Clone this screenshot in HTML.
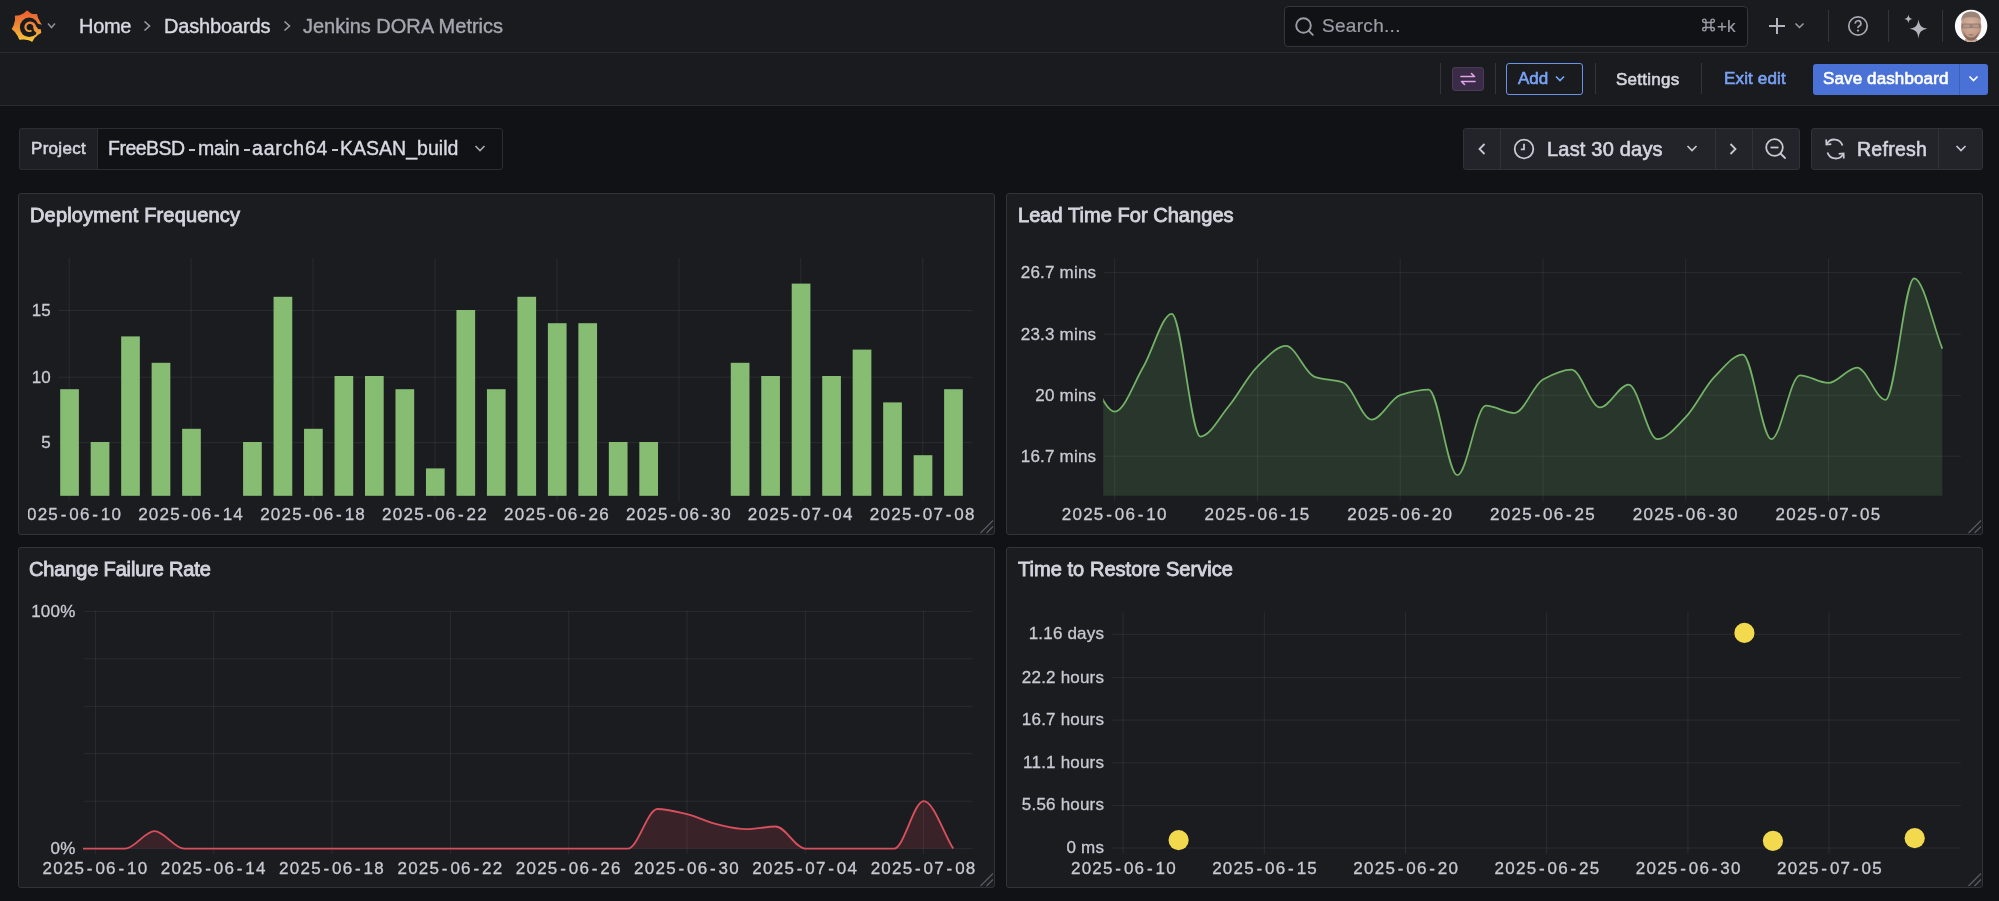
<!DOCTYPE html>
<html><head><meta charset="utf-8">
<style>
*{box-sizing:border-box;margin:0;padding:0}
html,body{width:1999px;height:901px;overflow:hidden;background:#111216;font-family:"Liberation Sans",sans-serif;color:#d0d0dc}
.abs{position:absolute}
.t{position:absolute;white-space:nowrap;line-height:1}
.bar1{position:absolute;left:0;top:0;width:1999px;height:53px;background:#1a1b1f;border-bottom:1px solid #2a2b31}
.bar2{position:absolute;left:0;top:53px;width:1999px;height:53px;background:#1a1b1f;border-bottom:1px solid #2a2b31}
.panel{position:absolute;background:#1b1c20;border:1px solid #323339;border-radius:3px}
.charts{position:absolute;left:0;top:0}
.g{stroke:rgba(204,204,220,0.085);stroke-width:1}
.bar{fill:#86bd73}
.al{font-family:"Liberation Sans",sans-serif;font-size:17px;fill:#c9c9d3;stroke:#c9c9d3;stroke-width:0.3px;letter-spacing:0.2px}
.dl{font-family:"Liberation Sans",sans-serif;font-size:17px;fill:#c9c9d3;stroke:#c9c9d3;stroke-width:0.3px;letter-spacing:1.25px}
.hd{stroke:rgba(204,204,220,0.35);stroke-width:1.3}
.div{position:absolute;width:1px;background:#34353b}
.btn{position:absolute;background:#22242a;border:1px solid #30323a;border-radius:3px}
.t,.charts{will-change:transform}
.t{-webkit-text-stroke:0.2px currentColor}
.t[style*="bold"]{-webkit-text-stroke:0}
</style></head><body>
<div class="bar1"></div>
<div class="bar2"></div>

<!-- logo -->
<svg class="abs" style="left:0;top:0" width="60" height="52" viewBox="0 0 60 52">
 <defs><linearGradient id="lg" x1="0" y1="10" x2="0" y2="42" gradientUnits="userSpaceOnUse"><stop offset="0" stop-color="#e95b30"/><stop offset="0.55" stop-color="#ef8f35"/><stop offset="1" stop-color="#f6cf3c"/></linearGradient></defs>
 <path fill="url(#lg)" d="M13.1,26.4L13.4,25.8L13.7,25.2L13.9,24.6L14.0,24.1L14.1,23.5L14.3,22.9L14.4,22.3L14.6,21.8L14.8,21.2L15.0,20.7L15.1,20.0L15.0,19.3L15.0,18.6L15.0,17.8L14.9,16.9L14.9,16.0L15.5,15.6L16.4,15.5L17.3,15.5L18.1,15.4L18.8,15.3L19.5,15.2L20.0,15.0L20.6,14.7L21.1,14.4L21.6,14.2L22.1,13.9L22.7,13.7L23.2,13.5L23.8,13.2L24.3,12.8L24.8,12.3L25.4,11.8L26.0,11.3L26.6,10.8L27.3,10.6L28.0,11.1L28.6,11.6L29.2,12.1L29.7,12.6L30.3,13.0L30.8,13.3L31.4,13.5L31.9,13.7L32.5,13.9L33.1,13.9L33.8,13.9L34.5,13.9L35.2,13.9L36.0,13.9L36.9,13.9L37.2,14.6L37.4,15.4L37.6,16.1L37.8,16.8L37.9,17.5L38.1,18.1L38.4,18.7L38.7,19.1L39.0,19.6L39.3,20.2L39.5,20.7L39.8,21.2L40.0,21.8L40.2,22.3L40.6,22.8L41.1,23.4L41.5,23.9L41.9,24.5L41.6,25.2L41.2,25.8L41.0,26.4L40.8,27.0L40.7,27.6L40.7,28.2L40.7,28.8L40.8,29.4L40.9,30.0L41.0,30.7L41.1,31.4L41.2,32.2L41.2,32.9L40.6,33.3L39.9,33.7L39.3,34.1L38.7,34.4L38.2,34.8L37.7,35.1L37.3,35.5L36.8,35.9L36.4,36.4L36.0,36.7L35.5,37.1L35.0,37.5L34.6,37.9L34.2,38.4L33.9,39.0L33.5,39.7L33.1,40.4L32.6,41.1L32.2,41.9L31.3,41.5L30.6,41.1L29.8,40.8L29.2,40.5L28.5,40.2L27.9,40.0L27.3,39.9L26.7,39.9L26.1,39.8L25.5,39.8L25.0,39.7L24.4,39.6L23.8,39.5L23.2,39.5L22.5,39.5L21.8,39.6L21.1,39.7L20.4,39.7L19.6,39.8L19.1,39.3L18.8,38.6L18.5,37.9L18.2,37.2L17.9,36.6L17.7,36.0L17.3,35.5L17.0,35.1L16.6,34.6L16.2,34.1L15.9,33.7L15.6,33.1L15.3,32.6L15.0,32.1L14.6,31.7L14.1,31.2L13.5,30.7L13.0,30.2L12.4,29.7L11.7,29.1L12.0,28.4L12.4,27.7L12.7,27.0Z"/>
 <ellipse cx="29.2" cy="27.3" rx="9.3" ry="9.7" fill="#1a1b1f"/>
 <path fill="#1a1b1f" d="M36.5,23.5 L42,24.8 L41.5,29.3 L37.5,29 Z"/>
 <path fill="url(#lg)" d="M36.12,29.12L36.24,28.22L36.24,27.31L36.11,26.43L35.87,25.57L35.51,24.77L35.04,24.03L34.49,23.36L33.86,22.79L33.15,22.30L32.40,21.93L31.61,21.66L30.79,21.51L29.97,21.47L29.16,21.54L28.38,21.73L27.63,22.01L26.94,22.40L26.31,22.86L25.76,23.41L25.30,24.02L24.92,24.68L24.65,25.38L24.47,26.11L24.40,26.84L24.43,27.57L24.56,28.28L24.78,28.96L25.09,29.60L25.48,30.18L25.94,30.70L26.46,31.14L27.04,31.50L27.65,31.78L28.28,31.96L28.93,32.06L29.58,32.07L30.21,31.99L30.82,31.82L31.40,31.57L31.93,31.25L31.07,29.78L30.75,29.97L30.39,30.11L30.01,30.21L29.63,30.25L29.23,30.24L28.84,30.17L28.46,30.05L28.09,29.87L27.75,29.65L27.44,29.38L27.17,29.06L26.95,28.71L26.77,28.33L26.64,27.92L26.58,27.50L26.57,27.07L26.62,26.64L26.73,26.21L26.90,25.81L27.12,25.42L27.40,25.07L27.73,24.76L28.09,24.49L28.50,24.27L28.93,24.11L29.39,24.01L29.86,23.98L30.33,24.01L30.80,24.10L31.25,24.26L31.68,24.48L32.08,24.76L32.43,25.10L32.74,25.48L33.00,25.90L33.20,26.36L33.33,26.85L33.40,27.35L33.40,27.86L33.32,28.37Z"/>
 <path fill="url(#lg)" d="M33.2,27.2 L36.4,26.6 L39.2,30.4 L37.2,33.6 L34,30.5 Z"/>
 <polyline points="48,23.5 51.5,27.5 55,23.5" fill="none" stroke="#8d8e96" stroke-width="1.5"/>
</svg>

<div class="t" style="left:79px;top:15.7px;font-size:20px;color:#d8d8e2;letter-spacing:-0.3px;-webkit-text-stroke:0.4px #d8d8e2">Home</div>
<svg class="abs" style="left:140px;top:18px" width="14" height="16"><polyline points="4.5,3.5 9.5,8 4.5,12.5" fill="none" stroke="#9a9ba4" stroke-width="1.6"/></svg>
<div class="t" style="left:164px;top:15.7px;font-size:20px;color:#d8d8e2;letter-spacing:-0.15px;-webkit-text-stroke:0.4px #d8d8e2">Dashboards</div>
<svg class="abs" style="left:280px;top:18px" width="14" height="16"><polyline points="4.5,3.5 9.5,8 4.5,12.5" fill="none" stroke="#9a9ba4" stroke-width="1.6"/></svg>
<div class="t" style="left:303px;top:15.7px;font-size:20px;color:#a6a6b0;-webkit-text-stroke:0.4px #a6a6b0">Jenkins DORA Metrics</div>

<!-- search -->
<div class="abs" style="left:1284px;top:6px;width:464px;height:41px;background:#111216;border:1px solid #35363c;border-radius:4px"></div>
<svg class="abs" style="left:1290px;top:12px" width="28" height="28" viewBox="0 0 28 28"><circle cx="13.5" cy="13.5" r="7.3" fill="none" stroke="#9c9ca6" stroke-width="1.9"/><line x1="18.8" y1="18.8" x2="22.8" y2="22.8" stroke="#9c9ca6" stroke-width="1.9" stroke-linecap="round"/></svg>
<div class="t" style="left:1322px;top:16.2px;font-size:19px;color:#9c9ca6;letter-spacing:0.3px">Search...</div>
<svg class="abs" style="left:1700px;top:17px" width="20" height="18" viewBox="0 0 20 18">
 <path d="M6,5.5 H11 V10.5 H6 Z M6,5.5 V3.8 A1.7,1.7 0 1 0 4.3,5.5 H6 M11,5.5 V3.8 A1.7,1.7 0 1 1 12.7,5.5 H11 M6,10.5 V12.2 A1.7,1.7 0 1 1 4.3,10.5 H6 M11,10.5 V12.2 A1.7,1.7 0 1 0 12.7,10.5 H11" fill="none" stroke="#9c9ca6" stroke-width="1.4"/>
</svg>
<div class="t" style="left:1717px;top:17.7px;font-size:17px;color:#9c9ca6">+k</div>

<!-- right icons -->
<svg class="abs" style="left:1765px;top:14px" width="45" height="24" viewBox="0 0 45 24">
 <line x1="12" y1="4" x2="12" y2="20" stroke="#b4b4be" stroke-width="2"/><line x1="4" y1="12" x2="20" y2="12" stroke="#b4b4be" stroke-width="2"/>
 <polyline points="30.5,9.5 34.5,13.5 38.5,9.5" fill="none" stroke="#9c9ca6" stroke-width="1.5"/>
</svg>
<div class="div" style="left:1828px;top:10px;height:32px"></div>
<svg class="abs" style="left:1846px;top:14px" width="24" height="24" viewBox="0 0 24 24">
 <circle cx="12" cy="12" r="9.2" fill="none" stroke="#a8a8b2" stroke-width="1.7"/>
 <path d="M9.3,9.6 A2.8,2.8 0 1 1 12.9,12.2 C12.2,12.5 12,13 12,13.9" fill="none" stroke="#a8a8b2" stroke-width="1.7"/>
 <circle cx="12" cy="16.6" r="1.1" fill="#a8a8b2"/>
</svg>
<div class="div" style="left:1888px;top:10px;height:32px"></div>
<svg class="abs" style="left:1902px;top:13px" width="28" height="28" viewBox="0 0 28 28">
 <path d="M16.5,6.2 C17.4,12.6 19.2,14.6 25.4,15.8 C19.2,17 17.4,19 16.5,25.4 C15.6,19 13.8,17 7.6,15.8 C13.8,14.6 15.6,12.6 16.5,6.2 Z" fill="#b4b4be"/>
 <path d="M6.4,1.6 C6.9,4.6 7.6,5.4 10.7,6 C7.6,6.6 6.9,7.4 6.4,10.4 C5.9,7.4 5.2,6.6 2.1,6 C5.2,5.4 5.9,4.6 6.4,1.6 Z" fill="#b4b4be"/>
</svg>
<div class="div" style="left:1942px;top:10px;height:32px"></div>
<svg class="abs" style="left:1954px;top:9px" width="34" height="34" viewBox="0 0 34 34">
 <defs><clipPath id="av"><circle cx="17.1" cy="16.9" r="16.2"/></clipPath>
 <radialGradient id="fg" cx="0.5" cy="0.42" r="0.6"><stop offset="0" stop-color="#d8b4a0"/><stop offset="0.7" stop-color="#c39c88"/><stop offset="1" stop-color="#a88474"/></radialGradient></defs>
 <circle cx="17.1" cy="16.9" r="16.2" fill="#fbfbfb"/>
 <g clip-path="url(#av)">
  <path d="M11,30 L23,30 L24,36 L10,36 Z" fill="#c9a592"/>
  <ellipse cx="17.1" cy="17.6" rx="10.2" ry="13.6" fill="url(#fg)"/>
  <path d="M7.2,13 C7,6 11,2.6 17.1,2.6 C23.2,2.6 27.2,6 27,13 C25.8,9.5 24,8.2 17.1,8.2 C10.2,8.2 8.4,9.5 7.2,13 Z" fill="#9c8478"/>
  <rect x="8" y="14.6" width="18.4" height="4.6" rx="1.5" fill="#6b5a55" opacity="0.55"/>
  <rect x="9.2" y="15.5" width="6.6" height="3" rx="1" fill="#c8a898" opacity="0.6"/>
  <rect x="18.4" y="15.5" width="6.6" height="3" rx="1" fill="#c8a898" opacity="0.6"/>
  <path d="M9.5,22 C10.5,30 13.5,31.5 17.1,31.5 C20.7,31.5 23.7,30 24.7,22 C23,27 20,28.5 17.1,28.5 C14.2,28.5 11.2,27 9.5,22 Z" fill="#7e6356" opacity="0.8"/>
  <rect x="14.6" y="25" width="5" height="1.5" rx="0.7" fill="#9a7466" opacity="0.8"/>
 </g>
</svg>

<!-- toolbar row -->
<div class="div" style="left:1440px;top:63px;height:31px"></div>
<div class="abs" style="left:1452px;top:67px;width:32px;height:24px;background:#3a2c46;border:1px solid #4a3a58;border-radius:3px"></div>
<svg class="abs" style="left:1452px;top:67px" width="32" height="24" viewBox="0 0 32 24">
 <path d="M9,9.5 H22.5 M19.5,6.5 L22.5,9.5 M23,14.5 H9.5 M12.5,17.5 L9.5,14.5" fill="none" stroke="#e0a4e8" stroke-width="1.6" stroke-linecap="round"/>
</svg>
<div class="div" style="left:1494.5px;top:63px;height:31px"></div>
<div class="abs" style="left:1506px;top:63px;width:77px;height:32px;border:1.5px solid #6a93e8;border-radius:3px"></div>
<div class="t" style="left:1517.5px;top:70.3px;font-size:17px;-webkit-text-stroke:0.6px #79a2f5;color:#79a2f5;letter-spacing:0.0px">Add</div>
<svg class="abs" style="left:1552px;top:72px" width="16" height="14"><polyline points="4,4.5 8,8.5 12,4.5" fill="none" stroke="#79a2f5" stroke-width="1.7"/></svg>
<div class="div" style="left:1594.5px;top:63px;height:31px"></div>
<div class="t" style="left:1616px;top:70.6px;font-size:17px;-webkit-text-stroke:0.6px #d4d4de;color:#d4d4de;letter-spacing:0.25px">Settings</div>
<div class="div" style="left:1701px;top:63px;height:31px"></div>
<div class="t" style="left:1723.5px;top:70.3px;font-size:17px;-webkit-text-stroke:0.6px #79a2f5;color:#79a2f5;letter-spacing:0.15px">Exit edit</div>
<div class="abs" style="left:1813px;top:63.5px;width:175px;height:31px;background:#4a72d6;border-radius:3px"></div>
<div class="abs" style="left:1958.5px;top:63.5px;width:1px;height:31px;background:#3d5fb8"></div>
<div class="t" style="left:1823px;top:70.3px;font-size:17px;-webkit-text-stroke:0.6px #ffffff;color:#ffffff;letter-spacing:0.12px">Save dashboard</div>
<svg class="abs" style="left:1966px;top:72px" width="16" height="14"><polyline points="3.5,4.5 7.5,8.5 11.5,4.5" fill="none" stroke="#ffffff" stroke-width="1.7"/></svg>

<!-- variable -->
<div class="abs" style="left:19px;top:128px;width:484px;height:42px;background:#111216;border:1px solid #2c2d33;border-radius:3px"></div>
<div class="abs" style="left:19px;top:128px;width:79px;height:42px;background:#1e1f24;border:1px solid #2c2d33;border-radius:3px 0 0 3px"></div>
<div class="t" style="left:30.5px;top:140.4px;font-size:17px;-webkit-text-stroke:0.6px #d4d4de;color:#d4d4de;letter-spacing:0.3px">Project</div>
<div class="t" style="left:107.5px;top:138.6px;font-size:19.5px;color:#d8d8e2;letter-spacing:-0.5px;-webkit-text-stroke:0.4px #d8d8e2">FreeBSD</div><div class="abs" style="left:189px;top:149px;width:6px;height:2px;background:#c4c4ce"></div><div class="t" style="left:197.5px;top:138.6px;font-size:19.5px;color:#d8d8e2;letter-spacing:-0.2px;-webkit-text-stroke:0.4px #d8d8e2">main</div><div class="abs" style="left:244px;top:149px;width:6px;height:2px;background:#c4c4ce"></div><div class="t" style="left:252px;top:138.6px;font-size:19.5px;color:#d8d8e2;letter-spacing:0.83px;-webkit-text-stroke:0.4px #d8d8e2">aarch64</div><div class="abs" style="left:331.8px;top:149px;width:6px;height:2px;background:#c4c4ce"></div><div class="t" style="left:339.5px;top:138.6px;font-size:19.5px;color:#d8d8e2;letter-spacing:0.02px;-webkit-text-stroke:0.4px #d8d8e2">KASAN_build</div>
<svg class="abs" style="left:472px;top:141px" width="16" height="14"><polyline points="3.5,5 8,9.5 12.5,5" fill="none" stroke="#a8a8b2" stroke-width="1.6"/></svg>

<!-- time picker -->
<div class="btn" style="left:1463px;top:128px;width:337px;height:42px"></div>
<div class="div" style="left:1500px;top:128px;height:42px;background:#30323a"></div>
<div class="div" style="left:1714.5px;top:128px;height:42px;background:#30323a"></div>
<div class="div" style="left:1752px;top:128px;height:42px;background:#30323a"></div>
<svg class="abs" style="left:1474px;top:140px" width="16" height="18"><polyline points="10.5,4 5.5,9 10.5,14" fill="none" stroke="#c8c8d2" stroke-width="1.8"/></svg>
<svg class="abs" style="left:1512px;top:137px" width="24" height="24" viewBox="0 0 24 24"><circle cx="12" cy="12" r="9.3" fill="none" stroke="#c8c8d2" stroke-width="1.8"/><polyline points="12,6.8 12,12.3 8.8,12.3" fill="none" stroke="#c8c8d2" stroke-width="1.8"/></svg>
<div class="t" style="left:1547px;top:138.7px;font-size:20px;-webkit-text-stroke:0.6px #d4d4de;color:#d4d4de;letter-spacing:0.2px">Last 30 days</div>
<svg class="abs" style="left:1684px;top:141px" width="16" height="14"><polyline points="3.5,5 8,9.5 12.5,5" fill="none" stroke="#c8c8d2" stroke-width="1.7"/></svg>
<svg class="abs" style="left:1725px;top:140px" width="16" height="18"><polyline points="5.5,4 10.5,9 5.5,14" fill="none" stroke="#c8c8d2" stroke-width="1.8"/></svg>
<svg class="abs" style="left:1763px;top:136px" width="26" height="26" viewBox="0 0 26 26"><circle cx="11.5" cy="11.5" r="8.3" fill="none" stroke="#c8c8d2" stroke-width="1.8"/><line x1="7.5" y1="11.5" x2="15.5" y2="11.5" stroke="#c8c8d2" stroke-width="1.8"/><line x1="17.5" y1="17.5" x2="22" y2="22" stroke="#c8c8d2" stroke-width="1.8" stroke-linecap="round"/></svg>
<div class="btn" style="left:1811px;top:128px;width:172px;height:42px"></div>
<div class="div" style="left:1938px;top:128px;height:42px;background:#30323a"></div>
<svg class="abs" style="left:1822px;top:136px" width="26" height="26" viewBox="0 0 26 26">
 <path d="M20.5,9.5 A8.5,8.5 0 0 0 4.8,8.2" fill="none" stroke="#c8c8d2" stroke-width="1.8"/>
 <path d="M5.5,16.5 A8.5,8.5 0 0 0 21.2,17.8" fill="none" stroke="#c8c8d2" stroke-width="1.8"/>
 <polyline points="4.2,3.5 4.4,8.6 9.3,8.2" fill="none" stroke="#c8c8d2" stroke-width="1.8"/>
 <polyline points="21.8,22.5 21.6,17.4 16.7,17.8" fill="none" stroke="#c8c8d2" stroke-width="1.8"/>
</svg>
<div class="t" style="left:1857px;top:139.6px;font-size:19.5px;-webkit-text-stroke:0.6px #d4d4de;color:#d4d4de;letter-spacing:0.27px">Refresh</div>
<svg class="abs" style="left:1953px;top:141px" width="16" height="14"><polyline points="3.5,5 8,9.5 12.5,5" fill="none" stroke="#c8c8d2" stroke-width="1.7"/></svg>

<!-- panels -->
<div class="panel" style="left:18px;top:193px;width:977px;height:342px"></div>
<div class="panel" style="left:1005.5px;top:193px;width:977.5px;height:342px"></div>
<div class="panel" style="left:18px;top:546.5px;width:977px;height:341.5px"></div>
<div class="panel" style="left:1005.5px;top:546.5px;width:977.5px;height:341.5px"></div>
<div class="t" style="left:29.5px;top:205.3px;font-size:20px;-webkit-text-stroke:0.85px #d4d4de;color:#d4d4de;letter-spacing:0.17px">Deployment Frequency</div>
<div class="t" style="left:1017.5px;top:205.3px;font-size:20px;-webkit-text-stroke:0.85px #d4d4de;color:#d4d4de;letter-spacing:0.05px">Lead Time For Changes</div>
<div class="t" style="left:29px;top:559.1px;font-size:20px;-webkit-text-stroke:0.85px #d4d4de;color:#d4d4de;letter-spacing:-0.15px">Change Failure Rate</div>
<div class="t" style="left:1017.5px;top:559.1px;font-size:20px;-webkit-text-stroke:0.85px #d4d4de;color:#d4d4de;letter-spacing:0.05px">Time to Restore Service</div>

<svg class="charts" width="1999" height="901" viewBox="0 0 1999 901"><defs><clipPath id="c1"><rect x="28" y="190" width="960" height="345"/></clipPath><clipPath id="c2"><rect x="1103.2" y="250" width="860" height="250"/></clipPath><clipPath id="c3"><rect x="83" y="600" width="890" height="260"/></clipPath></defs><g clip-path="url(#c1)"><line x1="59" y1="310.5" x2="972.6" y2="310.5" class="g"/><line x1="59" y1="377.2" x2="972.6" y2="377.2" class="g"/><line x1="59" y1="442.7" x2="972.6" y2="442.7" class="g"/><line x1="69.2" y1="258" x2="69.2" y2="501" class="g"/><line x1="191.1" y1="258" x2="191.1" y2="501" class="g"/><line x1="313.1" y1="258" x2="313.1" y2="501" class="g"/><line x1="435.0" y1="258" x2="435.0" y2="501" class="g"/><line x1="557.0" y1="258" x2="557.0" y2="501" class="g"/><line x1="678.9" y1="258" x2="678.9" y2="501" class="g"/><line x1="800.8" y1="258" x2="800.8" y2="501" class="g"/><line x1="922.8" y1="258" x2="922.8" y2="501" class="g"/><rect x="60.20" y="389.20" width="18.7" height="106.60" class="bar"/><rect x="90.68" y="442.00" width="18.7" height="53.80" class="bar"/><rect x="121.16" y="336.40" width="18.7" height="159.40" class="bar"/><rect x="151.64" y="362.80" width="18.7" height="133.00" class="bar"/><rect x="182.12" y="428.80" width="18.7" height="67.00" class="bar"/><rect x="243.08" y="442.00" width="18.7" height="53.80" class="bar"/><rect x="273.56" y="296.80" width="18.7" height="199.00" class="bar"/><rect x="304.04" y="428.80" width="18.7" height="67.00" class="bar"/><rect x="334.52" y="376.00" width="18.7" height="119.80" class="bar"/><rect x="365.00" y="376.00" width="18.7" height="119.80" class="bar"/><rect x="395.48" y="389.20" width="18.7" height="106.60" class="bar"/><rect x="425.96" y="468.40" width="18.7" height="27.40" class="bar"/><rect x="456.44" y="310.00" width="18.7" height="185.80" class="bar"/><rect x="486.92" y="389.20" width="18.7" height="106.60" class="bar"/><rect x="517.40" y="296.80" width="18.7" height="199.00" class="bar"/><rect x="547.88" y="323.20" width="18.7" height="172.60" class="bar"/><rect x="578.36" y="323.20" width="18.7" height="172.60" class="bar"/><rect x="608.84" y="442.00" width="18.7" height="53.80" class="bar"/><rect x="639.32" y="442.00" width="18.7" height="53.80" class="bar"/><rect x="730.76" y="362.80" width="18.7" height="133.00" class="bar"/><rect x="761.24" y="376.00" width="18.7" height="119.80" class="bar"/><rect x="791.72" y="283.60" width="18.7" height="212.20" class="bar"/><rect x="822.20" y="376.00" width="18.7" height="119.80" class="bar"/><rect x="852.68" y="349.60" width="18.7" height="146.20" class="bar"/><rect x="883.16" y="402.40" width="18.7" height="93.40" class="bar"/><rect x="913.64" y="455.20" width="18.7" height="40.60" class="bar"/><rect x="944.12" y="389.20" width="18.7" height="106.60" class="bar"/><text x="51" y="316.0" class="al" text-anchor="end">15</text><text x="51" y="382.7" class="al" text-anchor="end">10</text><text x="51" y="448.2" class="al" text-anchor="end">5</text><text x="69.2" y="520.2" class="dl" text-anchor="middle">2025<tspan dx="1.6">-</tspan><tspan dx="1.6">06</tspan><tspan dx="1.6">-</tspan><tspan dx="1.6">10</tspan></text><text x="191.1" y="520.2" class="dl" text-anchor="middle">2025<tspan dx="1.6">-</tspan><tspan dx="1.6">06</tspan><tspan dx="1.6">-</tspan><tspan dx="1.6">14</tspan></text><text x="313.1" y="520.2" class="dl" text-anchor="middle">2025<tspan dx="1.6">-</tspan><tspan dx="1.6">06</tspan><tspan dx="1.6">-</tspan><tspan dx="1.6">18</tspan></text><text x="435.0" y="520.2" class="dl" text-anchor="middle">2025<tspan dx="1.6">-</tspan><tspan dx="1.6">06</tspan><tspan dx="1.6">-</tspan><tspan dx="1.6">22</tspan></text><text x="557.0" y="520.2" class="dl" text-anchor="middle">2025<tspan dx="1.6">-</tspan><tspan dx="1.6">06</tspan><tspan dx="1.6">-</tspan><tspan dx="1.6">26</tspan></text><text x="678.9" y="520.2" class="dl" text-anchor="middle">2025<tspan dx="1.6">-</tspan><tspan dx="1.6">06</tspan><tspan dx="1.6">-</tspan><tspan dx="1.6">30</tspan></text><text x="800.8" y="520.2" class="dl" text-anchor="middle">2025<tspan dx="1.6">-</tspan><tspan dx="1.6">07</tspan><tspan dx="1.6">-</tspan><tspan dx="1.6">04</tspan></text><text x="922.8" y="520.2" class="dl" text-anchor="middle">2025<tspan dx="1.6">-</tspan><tspan dx="1.6">07</tspan><tspan dx="1.6">-</tspan><tspan dx="1.6">08</tspan></text></g><line x1="1104" y1="272.6" x2="1961" y2="272.6" class="g"/><line x1="1104" y1="334.2" x2="1961" y2="334.2" class="g"/><line x1="1104" y1="395.3" x2="1961" y2="395.3" class="g"/><line x1="1104" y1="456.2" x2="1961" y2="456.2" class="g"/><line x1="1114.7" y1="258.7" x2="1114.7" y2="501" class="g"/><line x1="1257.5" y1="258.7" x2="1257.5" y2="501" class="g"/><line x1="1400.2" y1="258.7" x2="1400.2" y2="501" class="g"/><line x1="1543.0" y1="258.7" x2="1543.0" y2="501" class="g"/><line x1="1685.7" y1="258.7" x2="1685.7" y2="501" class="g"/><line x1="1828.5" y1="258.7" x2="1828.5" y2="501" class="g"/><g clip-path="url(#c2)"><path d="M1086.15,368.00C1095.67,382.53 1105.18,411.60 1114.70,411.60C1124.22,411.60 1133.73,383.17 1143.25,367.00C1152.77,350.83 1162.28,313.80 1171.80,313.80C1181.32,313.80 1190.83,436.50 1200.35,436.50C1209.87,436.50 1219.38,417.46 1228.90,406.00C1238.42,394.54 1247.93,375.65 1257.45,366.60C1266.97,357.55 1276.48,345.90 1286.00,345.90C1295.52,345.90 1305.03,373.59 1314.55,376.80C1324.07,380.01 1333.58,379.20 1343.10,382.50C1352.62,385.80 1362.13,419.70 1371.65,419.70C1381.17,419.70 1390.68,398.10 1400.20,395.10C1409.72,392.10 1419.23,389.60 1428.75,389.60C1438.27,389.60 1447.78,475.20 1457.30,475.20C1466.82,475.20 1476.33,405.70 1485.85,405.70C1495.37,405.70 1504.88,413.00 1514.40,413.00C1523.92,413.00 1533.43,384.55 1542.95,379.50C1552.47,374.45 1561.98,369.70 1571.50,369.70C1581.02,369.70 1590.53,407.40 1600.05,407.40C1609.57,407.40 1619.08,384.60 1628.60,384.60C1638.12,384.60 1647.63,439.20 1657.15,439.20C1666.67,439.20 1676.18,426.66 1685.70,417.20C1695.22,407.74 1704.73,386.85 1714.25,377.20C1723.77,367.55 1733.28,354.50 1742.80,354.50C1752.32,354.50 1761.83,439.20 1771.35,439.20C1780.87,439.20 1790.38,375.30 1799.90,375.30C1809.42,375.30 1818.93,382.90 1828.45,382.90C1837.97,382.90 1847.48,367.50 1857.00,367.50C1866.52,367.50 1876.03,399.80 1885.55,399.80C1895.07,399.80 1904.58,278.30 1914.10,278.30C1923.50,278.30 1932.90,325.17 1942.30,348.60 L1942.3,495.8 L1086.15,495.8 Z" fill="rgba(115,191,105,0.165)"/><path d="M1086.15,368.00C1095.67,382.53 1105.18,411.60 1114.70,411.60C1124.22,411.60 1133.73,383.17 1143.25,367.00C1152.77,350.83 1162.28,313.80 1171.80,313.80C1181.32,313.80 1190.83,436.50 1200.35,436.50C1209.87,436.50 1219.38,417.46 1228.90,406.00C1238.42,394.54 1247.93,375.65 1257.45,366.60C1266.97,357.55 1276.48,345.90 1286.00,345.90C1295.52,345.90 1305.03,373.59 1314.55,376.80C1324.07,380.01 1333.58,379.20 1343.10,382.50C1352.62,385.80 1362.13,419.70 1371.65,419.70C1381.17,419.70 1390.68,398.10 1400.20,395.10C1409.72,392.10 1419.23,389.60 1428.75,389.60C1438.27,389.60 1447.78,475.20 1457.30,475.20C1466.82,475.20 1476.33,405.70 1485.85,405.70C1495.37,405.70 1504.88,413.00 1514.40,413.00C1523.92,413.00 1533.43,384.55 1542.95,379.50C1552.47,374.45 1561.98,369.70 1571.50,369.70C1581.02,369.70 1590.53,407.40 1600.05,407.40C1609.57,407.40 1619.08,384.60 1628.60,384.60C1638.12,384.60 1647.63,439.20 1657.15,439.20C1666.67,439.20 1676.18,426.66 1685.70,417.20C1695.22,407.74 1704.73,386.85 1714.25,377.20C1723.77,367.55 1733.28,354.50 1742.80,354.50C1752.32,354.50 1761.83,439.20 1771.35,439.20C1780.87,439.20 1790.38,375.30 1799.90,375.30C1809.42,375.30 1818.93,382.90 1828.45,382.90C1837.97,382.90 1847.48,367.50 1857.00,367.50C1866.52,367.50 1876.03,399.80 1885.55,399.80C1895.07,399.80 1904.58,278.30 1914.10,278.30C1923.50,278.30 1932.90,325.17 1942.30,348.60" fill="none" stroke="#73b267" stroke-width="1.75"/></g><text x="1096.3" y="278.2" class="al" text-anchor="end">26.7 mins</text><text x="1096.3" y="339.8" class="al" text-anchor="end">23.3 mins</text><text x="1096.3" y="400.9" class="al" text-anchor="end">20 mins</text><text x="1096.3" y="461.8" class="al" text-anchor="end">16.7 mins</text><text x="1114.7" y="520.2" class="dl" text-anchor="middle">2025<tspan dx="1.6">-</tspan><tspan dx="1.6">06</tspan><tspan dx="1.6">-</tspan><tspan dx="1.6">10</tspan></text><text x="1257.5" y="520.2" class="dl" text-anchor="middle">2025<tspan dx="1.6">-</tspan><tspan dx="1.6">06</tspan><tspan dx="1.6">-</tspan><tspan dx="1.6">15</tspan></text><text x="1400.2" y="520.2" class="dl" text-anchor="middle">2025<tspan dx="1.6">-</tspan><tspan dx="1.6">06</tspan><tspan dx="1.6">-</tspan><tspan dx="1.6">20</tspan></text><text x="1543.0" y="520.2" class="dl" text-anchor="middle">2025<tspan dx="1.6">-</tspan><tspan dx="1.6">06</tspan><tspan dx="1.6">-</tspan><tspan dx="1.6">25</tspan></text><text x="1685.7" y="520.2" class="dl" text-anchor="middle">2025<tspan dx="1.6">-</tspan><tspan dx="1.6">06</tspan><tspan dx="1.6">-</tspan><tspan dx="1.6">30</tspan></text><text x="1828.5" y="520.2" class="dl" text-anchor="middle">2025<tspan dx="1.6">-</tspan><tspan dx="1.6">07</tspan><tspan dx="1.6">-</tspan><tspan dx="1.6">05</tspan></text><line x1="84" y1="611.4" x2="972.6" y2="611.4" class="g"/><line x1="84" y1="658.8" x2="972.6" y2="658.8" class="g"/><line x1="84" y1="706.3" x2="972.6" y2="706.3" class="g"/><line x1="84" y1="753.7" x2="972.6" y2="753.7" class="g"/><line x1="84" y1="801.2" x2="972.6" y2="801.2" class="g"/><line x1="84" y1="848.6" x2="972.6" y2="848.6" class="g"/><line x1="95.4" y1="611" x2="95.4" y2="854" class="g"/><line x1="213.7" y1="611" x2="213.7" y2="854" class="g"/><line x1="332.0" y1="611" x2="332.0" y2="854" class="g"/><line x1="450.4" y1="611" x2="450.4" y2="854" class="g"/><line x1="568.7" y1="611" x2="568.7" y2="854" class="g"/><line x1="687.0" y1="611" x2="687.0" y2="854" class="g"/><line x1="805.3" y1="611" x2="805.3" y2="854" class="g"/><line x1="923.6" y1="611" x2="923.6" y2="854" class="g"/><g clip-path="url(#c3)"><path d="M65.82,848.60C75.68,848.60 85.54,848.60 95.40,848.60C105.26,848.60 115.12,848.60 124.98,848.60C134.84,848.60 144.70,831.05 154.56,831.05C164.42,831.05 174.28,848.60 184.14,848.60C194.00,848.60 203.86,848.60 213.72,848.60C223.58,848.60 233.44,848.60 243.30,848.60C253.16,848.60 263.02,848.60 272.88,848.60C282.74,848.60 292.60,848.60 302.46,848.60C312.32,848.60 322.18,848.60 332.04,848.60C341.90,848.60 351.76,848.60 361.62,848.60C371.48,848.60 381.34,848.60 391.20,848.60C401.06,848.60 410.92,848.60 420.78,848.60C430.64,848.60 440.50,848.60 450.36,848.60C460.22,848.60 470.08,848.60 479.94,848.60C489.80,848.60 499.66,848.60 509.52,848.60C519.38,848.60 529.24,848.60 539.10,848.60C548.96,848.60 558.82,848.60 568.68,848.60C578.54,848.60 588.40,848.60 598.26,848.60C608.12,848.60 617.98,848.60 627.84,848.60C637.70,848.60 647.56,808.99 657.42,808.99C667.28,808.99 677.14,811.92 687.00,814.21C696.86,816.49 706.72,821.95 716.58,824.17C726.44,826.38 736.30,829.15 746.16,829.15C756.02,829.15 765.88,826.54 775.74,826.54C785.60,826.54 795.46,848.60 805.32,848.60C815.18,848.60 825.04,848.60 834.90,848.60C844.76,848.60 854.62,848.60 864.48,848.60C874.34,848.60 884.20,848.60 894.06,848.60C903.92,848.60 913.78,801.16 923.64,801.16C933.50,801.16 943.36,832.79 953.22,848.60 L953.22,848.6 L65.82,848.6 Z" fill="rgba(242,73,92,0.15)"/><path d="M65.82,848.60C75.68,848.60 85.54,848.60 95.40,848.60C105.26,848.60 115.12,848.60 124.98,848.60C134.84,848.60 144.70,831.05 154.56,831.05C164.42,831.05 174.28,848.60 184.14,848.60C194.00,848.60 203.86,848.60 213.72,848.60C223.58,848.60 233.44,848.60 243.30,848.60C253.16,848.60 263.02,848.60 272.88,848.60C282.74,848.60 292.60,848.60 302.46,848.60C312.32,848.60 322.18,848.60 332.04,848.60C341.90,848.60 351.76,848.60 361.62,848.60C371.48,848.60 381.34,848.60 391.20,848.60C401.06,848.60 410.92,848.60 420.78,848.60C430.64,848.60 440.50,848.60 450.36,848.60C460.22,848.60 470.08,848.60 479.94,848.60C489.80,848.60 499.66,848.60 509.52,848.60C519.38,848.60 529.24,848.60 539.10,848.60C548.96,848.60 558.82,848.60 568.68,848.60C578.54,848.60 588.40,848.60 598.26,848.60C608.12,848.60 617.98,848.60 627.84,848.60C637.70,848.60 647.56,808.99 657.42,808.99C667.28,808.99 677.14,811.92 687.00,814.21C696.86,816.49 706.72,821.95 716.58,824.17C726.44,826.38 736.30,829.15 746.16,829.15C756.02,829.15 765.88,826.54 775.74,826.54C785.60,826.54 795.46,848.60 805.32,848.60C815.18,848.60 825.04,848.60 834.90,848.60C844.76,848.60 854.62,848.60 864.48,848.60C874.34,848.60 884.20,848.60 894.06,848.60C903.92,848.60 913.78,801.16 923.64,801.16C933.50,801.16 943.36,832.79 953.22,848.60" fill="none" stroke="#d8505e" stroke-width="1.85"/></g><text x="75.5" y="617.4" class="al" text-anchor="end">100%</text><text x="75.5" y="854.0" class="al" text-anchor="end">0%</text><text x="95.4" y="874.1" class="dl" text-anchor="middle">2025<tspan dx="1.6">-</tspan><tspan dx="1.6">06</tspan><tspan dx="1.6">-</tspan><tspan dx="1.6">10</tspan></text><text x="213.7" y="874.1" class="dl" text-anchor="middle">2025<tspan dx="1.6">-</tspan><tspan dx="1.6">06</tspan><tspan dx="1.6">-</tspan><tspan dx="1.6">14</tspan></text><text x="332.0" y="874.1" class="dl" text-anchor="middle">2025<tspan dx="1.6">-</tspan><tspan dx="1.6">06</tspan><tspan dx="1.6">-</tspan><tspan dx="1.6">18</tspan></text><text x="450.4" y="874.1" class="dl" text-anchor="middle">2025<tspan dx="1.6">-</tspan><tspan dx="1.6">06</tspan><tspan dx="1.6">-</tspan><tspan dx="1.6">22</tspan></text><text x="568.7" y="874.1" class="dl" text-anchor="middle">2025<tspan dx="1.6">-</tspan><tspan dx="1.6">06</tspan><tspan dx="1.6">-</tspan><tspan dx="1.6">26</tspan></text><text x="687.0" y="874.1" class="dl" text-anchor="middle">2025<tspan dx="1.6">-</tspan><tspan dx="1.6">06</tspan><tspan dx="1.6">-</tspan><tspan dx="1.6">30</tspan></text><text x="805.3" y="874.1" class="dl" text-anchor="middle">2025<tspan dx="1.6">-</tspan><tspan dx="1.6">07</tspan><tspan dx="1.6">-</tspan><tspan dx="1.6">04</tspan></text><text x="923.6" y="874.1" class="dl" text-anchor="middle">2025<tspan dx="1.6">-</tspan><tspan dx="1.6">07</tspan><tspan dx="1.6">-</tspan><tspan dx="1.6">08</tspan></text><line x1="1112.5" y1="634.3" x2="1961" y2="634.3" class="g"/><line x1="1112.5" y1="677.6" x2="1961" y2="677.6" class="g"/><line x1="1112.5" y1="720.1" x2="1961" y2="720.1" class="g"/><line x1="1112.5" y1="762.8" x2="1961" y2="762.8" class="g"/><line x1="1112.5" y1="805.4" x2="1961" y2="805.4" class="g"/><line x1="1112.5" y1="848.0" x2="1961" y2="848.0" class="g"/><line x1="1123.1" y1="612" x2="1123.1" y2="854" class="g"/><line x1="1264.3" y1="612" x2="1264.3" y2="854" class="g"/><line x1="1405.5" y1="612" x2="1405.5" y2="854" class="g"/><line x1="1546.7" y1="612" x2="1546.7" y2="854" class="g"/><line x1="1687.9" y1="612" x2="1687.9" y2="854" class="g"/><line x1="1829.1" y1="612" x2="1829.1" y2="854" class="g"/><circle cx="1178.6" cy="840.1" r="10.1" fill="#f2d94e"/><circle cx="1744.4" cy="632.9" r="10.1" fill="#f2d94e"/><circle cx="1772.9" cy="840.8" r="10.1" fill="#f2d94e"/><circle cx="1914.7" cy="838.2" r="10.1" fill="#f2d94e"/><text x="1104.2" y="639.2" class="al" text-anchor="end">1.16 days</text><text x="1104.2" y="682.5" class="al" text-anchor="end">22.2 hours</text><text x="1104.2" y="725.0" class="al" text-anchor="end">16.7 hours</text><text x="1104.2" y="767.7" class="al" text-anchor="end">11.1 hours</text><text x="1104.2" y="810.3" class="al" text-anchor="end">5.56 hours</text><text x="1104.2" y="852.9" class="al" text-anchor="end">0 ms</text><text x="1123.9" y="874.1" class="dl" text-anchor="middle">2025<tspan dx="1.6">-</tspan><tspan dx="1.6">06</tspan><tspan dx="1.6">-</tspan><tspan dx="1.6">10</tspan></text><text x="1265.1" y="874.1" class="dl" text-anchor="middle">2025<tspan dx="1.6">-</tspan><tspan dx="1.6">06</tspan><tspan dx="1.6">-</tspan><tspan dx="1.6">15</tspan></text><text x="1406.3" y="874.1" class="dl" text-anchor="middle">2025<tspan dx="1.6">-</tspan><tspan dx="1.6">06</tspan><tspan dx="1.6">-</tspan><tspan dx="1.6">20</tspan></text><text x="1547.5" y="874.1" class="dl" text-anchor="middle">2025<tspan dx="1.6">-</tspan><tspan dx="1.6">06</tspan><tspan dx="1.6">-</tspan><tspan dx="1.6">25</tspan></text><text x="1688.7" y="874.1" class="dl" text-anchor="middle">2025<tspan dx="1.6">-</tspan><tspan dx="1.6">06</tspan><tspan dx="1.6">-</tspan><tspan dx="1.6">30</tspan></text><text x="1829.9" y="874.1" class="dl" text-anchor="middle">2025<tspan dx="1.6">-</tspan><tspan dx="1.6">07</tspan><tspan dx="1.6">-</tspan><tspan dx="1.6">05</tspan></text><line x1="980.5" y1="533" x2="993" y2="520.5" class="hd"/><line x1="986.5" y1="533" x2="993" y2="526.5" class="hd"/><line x1="1968.5" y1="533" x2="1981" y2="520.5" class="hd"/><line x1="1974.5" y1="533" x2="1981" y2="526.5" class="hd"/><line x1="980.5" y1="886" x2="993" y2="873.5" class="hd"/><line x1="986.5" y1="886" x2="993" y2="879.5" class="hd"/><line x1="1968.5" y1="886" x2="1981" y2="873.5" class="hd"/><line x1="1974.5" y1="886" x2="1981" y2="879.5" class="hd"/></svg>
</body></html>
